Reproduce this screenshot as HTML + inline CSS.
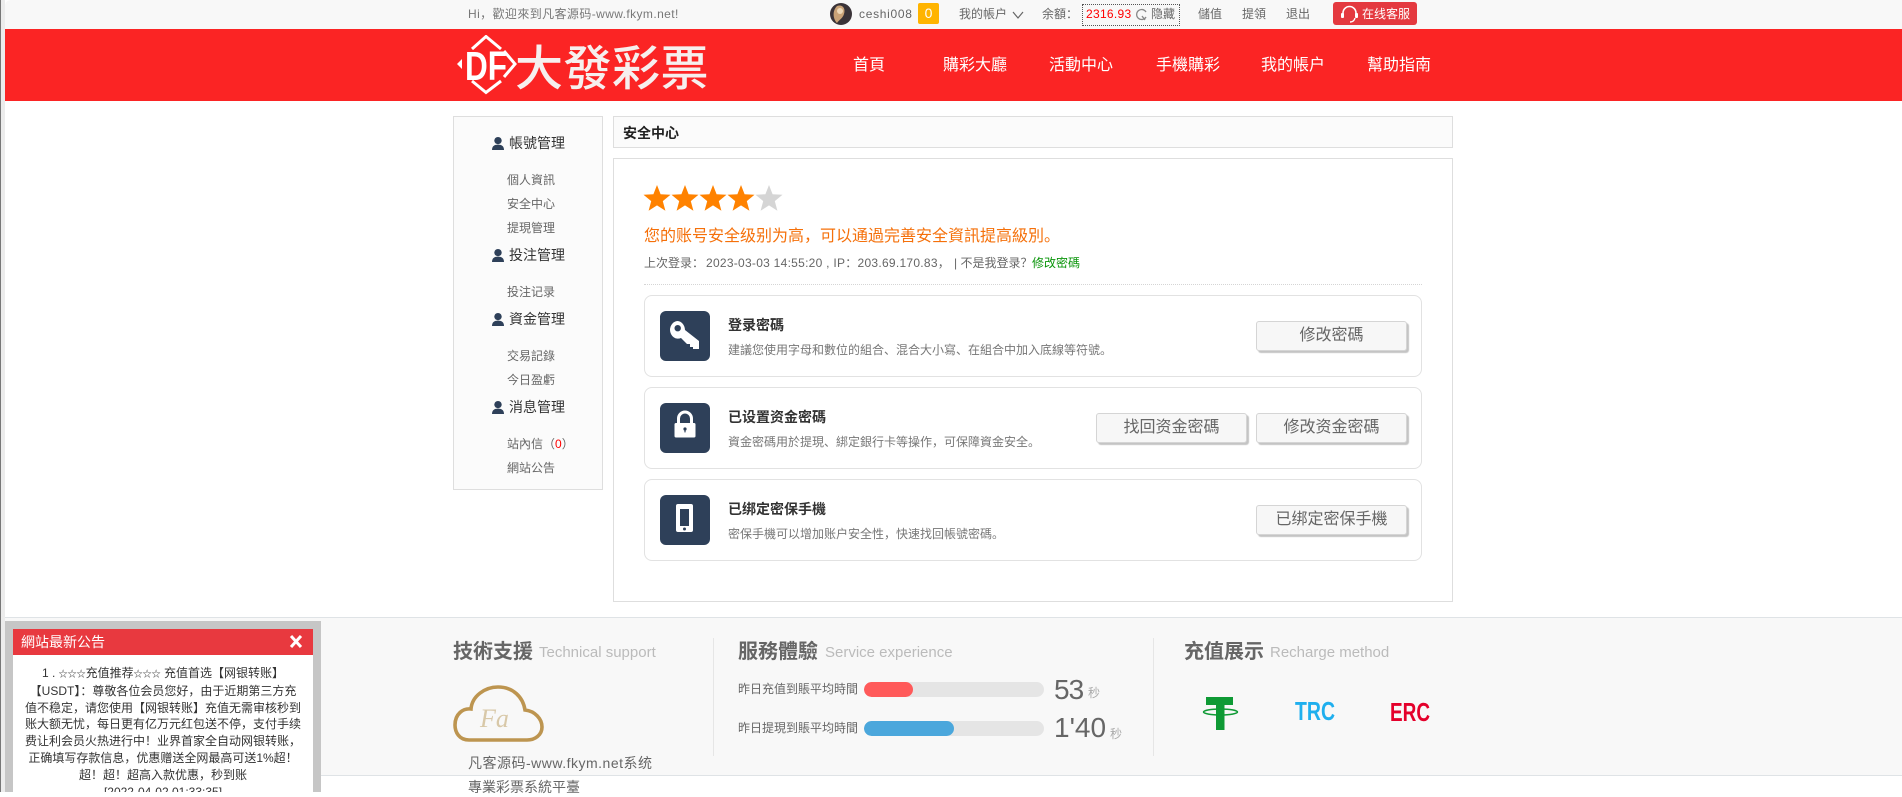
<!DOCTYPE html>
<html lang="zh"><head><meta charset="utf-8"><title>安全中心</title>
<style>
html,body{margin:0;padding:0;background:#fff}
body{width:1902px;height:792px;position:relative;overflow:hidden;font-family:"Liberation Sans","Noto Sans CJK TC",sans-serif;font-size:12px;color:#666}
.a{position:absolute;white-space:nowrap}
.c{line-height:20px;margin-top:-10px}
.h{font-size:14px;color:#333}
.n{font-size:16px;color:#fff;width:106px;text-align:center;line-height:24px;top:54px}
.side{left:507px}
.card{position:absolute;left:644px;width:776px;height:80px;border:1px solid #e2e2e2;border-radius:8px;background:#fff}
.ico{position:absolute;left:660px;width:50px;height:50px;background:#2e4059;border-radius:6px}
.t{left:728px;font-size:14px;font-weight:bold;color:#333}
.d{left:728px;font-size:12px;color:#777}
.b{position:absolute;width:149px;height:28px;line-height:27px;text-align:center;font-size:16px;color:#666;background:#f7f7f7;border:1px solid #d5d5d5;border-radius:3px;box-shadow:2px 2px 1px #c4c4c4}
.fh{font-size:20px;font-weight:bold;color:#666}
.fs{font-size:15px;color:#bbb}
.bar{position:absolute;left:864px;width:180px;height:15px;border-radius:8px;background:#e5e5e5;overflow:hidden}
.bar i{display:block;height:15px;border-radius:8px}
.st{font-size:9px}
</style></head><body>
<div class="a" style="left:0;top:0;width:1px;height:792px;background:#777"></div>
<div class="a" style="left:1px;top:0;width:4px;height:792px;background:#ececec"></div>
<div class="a" style="left:5px;top:0;width:1897px;height:29px;background:#f8f8f8;border-top-left-radius:6px"></div>

<!-- top bar -->
<div class="a c" style="left:468px;top:14px;color:#777;letter-spacing:.4px">Hi，歡迎來到凡客源码-www.fkym.net!</div>
<svg class="a" style="left:830px;top:3px" width="22" height="22" viewBox="0 0 22 22"><circle cx="11" cy="11" r="11" fill="#3a3338"/><path d="M7 3 C12 1 16 5 14 11 C13 15 9 17 7 20 C3 16 2 8 7 3Z" fill="#c9a277"/><circle cx="10" cy="8" r="3" fill="#eed8b8"/></svg>
<div class="a c" style="left:859px;top:14px;letter-spacing:.7px">ceshi008</div>
<div class="a" style="left:918px;top:3px;width:21px;height:21px;background:#ffb400;border-radius:2px;color:#fff;text-align:center;line-height:21px;font-size:14px">0</div>
<div class="a c" style="left:959px;top:14px">我的帳戶</div>
<svg class="a" style="left:1012px;top:11px" width="12" height="8" viewBox="0 0 12 8"><path d="M1 1 L6 7 L11 1" fill="none" stroke="#666" stroke-width="1.2"/></svg>
<div class="a c" style="left:1042px;top:14px">余額：</div>
<div class="a" style="left:1082px;top:4px;width:96px;height:20px;border:1px dotted #555"></div>
<div class="a c" style="left:1086px;top:14px;color:#f00;letter-spacing:.3px">2316.93</div>
<svg class="a" style="left:1136px;top:8px" width="12" height="13" viewBox="0 0 12 13"><path d="M10 9 A5 5 0 1 1 10 4 M9 12 L6 8" fill="none" stroke="#888" stroke-width="1.3"/></svg>
<div class="a c" style="left:1151px;top:14px">隐藏</div>
<div class="a c" style="left:1198px;top:14px">儲值</div>
<div class="a c" style="left:1242px;top:14px">提領</div>
<div class="a c" style="left:1286px;top:14px">退出</div>
<div class="a" style="left:1333px;top:2px;width:84px;height:23px;background:#e4393f;border-radius:3px"></div>
<svg class="a" style="left:1340px;top:4px" width="19" height="20" viewBox="0 0 19 20"><path d="M3 12 V9 A6.5 6.5 0 0 1 16 9 V12" fill="none" stroke="#fff" stroke-width="1.6"/><rect x="1" y="9" width="3" height="5" rx="1" fill="#fff"/><rect x="15" y="9" width="3" height="5" rx="1" fill="#fff"/><path d="M15 14 Q14 18 10 18" fill="none" stroke="#fff" stroke-width="1.4"/></svg>
<div class="a c" style="left:1362px;top:14px;color:#fff">在线客服</div>

<!-- red header -->
<div class="a" style="left:5px;top:29px;width:1897px;height:72px;background:#fb2424"></div>
<svg class="a" style="left:457px;top:35px" width="62" height="60" viewBox="0 0 62 60">
<path d="M15 14 L29 1.5 L44 14 M15 46 L29 57.5 L44 46 M47 16 L58 29 L47 42" fill="none" stroke="#fff" stroke-width="3"/>
<path d="M0 29 L5 24 V34Z" fill="#fff"/>
<text x="8" y="45" font-family="Liberation Sans" font-weight="bold" font-size="41" fill="#fff" textLength="42" lengthAdjust="spacingAndGlyphs">DF</text>
</svg>
<div class="a" style="left:515px;top:30px;font-size:48px;line-height:68px;letter-spacing:.5px;color:#f6efee;font-family:'Noto Sans CJK TC','Liberation Sans',sans-serif;font-weight:500">大發彩票</div>
<div class="a n" style="left:816px">首頁</div>
<div class="a n" style="left:922px">購彩大廳</div>
<div class="a n" style="left:1028px">活動中心</div>
<div class="a n" style="left:1135px">手機購彩</div>
<div class="a n" style="left:1240px">我的帳戶</div>
<div class="a n" style="left:1346px">幫助指南</div>

<!-- sidebar -->
<div class="a" style="left:453px;top:116px;width:148px;height:372px;background:#fbfbfb;border:1px solid #dedede"></div>
<svg width="0" height="0" style="position:absolute"><defs><symbol id="p" viewBox="0 0 12 13"><ellipse cx="6" cy="3.6" rx="3.7" ry="3.6" fill="#2e4059"/><path d="M0 13 C0 9 2.5 7.6 6 7.6 C9.5 7.6 12 9 12 13Z" fill="#2e4059"/></symbol></defs></svg>
<svg class="a" style="left:492px;top:137px" width="12" height="13"><use href="#p" width="12" height="13"/></svg>
<div class="a c h" style="left:509px;top:143px">帳號管理</div>
<div class="a c side" style="top:180px">個人資訊</div>
<div class="a c side" style="top:204px">安全中心</div>
<div class="a c side" style="top:228px">提現管理</div>
<svg class="a" style="left:492px;top:249px" width="12" height="13"><use href="#p" width="12" height="13"/></svg>
<div class="a c h" style="left:509px;top:255px">投注管理</div>
<div class="a c side" style="top:292px">投注记录</div>
<svg class="a" style="left:492px;top:313px" width="12" height="13"><use href="#p" width="12" height="13"/></svg>
<div class="a c h" style="left:509px;top:319px">資金管理</div>
<div class="a c side" style="top:356px">交易記錄</div>
<div class="a c side" style="top:380px">今日盈虧</div>
<svg class="a" style="left:492px;top:401px" width="12" height="13"><use href="#p" width="12" height="13"/></svg>
<div class="a c h" style="left:509px;top:407px">消息管理</div>
<div class="a c side" style="top:444px">站內信（<span style="color:#f00">0</span>）</div>
<div class="a c side" style="top:468px">網站公告</div>

<!-- main -->
<div class="a" style="left:613px;top:116px;width:838px;height:30px;background:#fbfbfb;border:1px solid #dedede"></div>
<div class="a c" style="left:623px;top:133px;font-size:14px;font-weight:bold;color:#222">安全中心</div>
<div class="a" style="left:613px;top:158px;width:838px;height:442px;background:#fff;border:1px solid #dedede"></div>
<svg class="a" style="left:643px;top:184px" width="140" height="29" viewBox="0 0 140 29">
<defs><path id="s" d="M14 1 L17.6 10.2 L27.5 10.8 L19.8 17.1 L22.4 26.8 L14 21.4 L5.6 26.8 L8.2 17.1 L0.5 10.8 L10.4 10.2Z"/></defs>
<use href="#s" fill="#ff8200"/><use href="#s" x="28" fill="#ff8200"/><use href="#s" x="56" fill="#ff8200"/><use href="#s" x="84" fill="#ff8200"/><use href="#s" x="112" fill="#d5d5d5"/>
</svg>
<div class="a c" style="left:644px;top:237px;font-size:16px;color:#f5700a">您的账号安全级别为高，可以通過完善安全資訊提高級別。</div>
<div class="a c" style="left:644px;top:263px">上次登录：</div>
<div class="a c" style="left:706px;top:263px;letter-spacing:.27px">2023-03-03 14:55:20 , IP：203.69.170.83，</div>
<div class="a c" style="left:954px;top:263px">| 不是我登录？</div>
<div class="a c" style="left:1032px;top:263px;color:#0a950a">修改密碼</div>
<div class="a" style="left:644px;top:284px;width:778px;border-top:1px dotted #d5d5d5"></div>

<div class="card" style="top:295px"></div>
<div class="card" style="top:387px"></div>
<div class="card" style="top:479px"></div>

<div class="ico" style="top:311px"><svg width="50" height="50" viewBox="0 0 50 50"><path fill-rule="evenodd" fill="#fff" d="M17.5 10 A8 9.5 0 0 1 25 19 L39 30 V38 H33 V36 H30 V33 H27 L21 27 A8 9 0 0 1 10 19 A8 9 0 0 1 17.5 10Z M17.7 14 A3.2 3.2 0 1 0 17.7 20.4 A3.2 3.2 0 1 0 17.7 14Z"/></svg></div>
<div class="ico" style="top:403px"><svg width="50" height="50" viewBox="0 0 50 50"><path d="M18.5 21 V15.5 A6.5 6.5 0 0 1 31.5 15.5 V21" fill="none" stroke="#fff" stroke-width="3"/><rect x="14.5" y="20" width="21" height="14.5" rx="1.5" fill="#fff"/><circle cx="25" cy="26" r="1.6" fill="#2e4059"/><rect x="24.4" y="26" width="1.2" height="3.4" fill="#2e4059"/></svg></div>
<div class="ico" style="top:495px"><svg width="50" height="50" viewBox="0 0 50 50"><rect x="16" y="9" width="17" height="28" rx="2" fill="#fff"/><rect x="20" y="14" width="9" height="17" fill="#2e4059"/><circle cx="24.5" cy="34" r="1.5" fill="#2e4059"/></svg></div>

<div class="a c t" style="top:325px">登录密碼</div>
<div class="a c d" style="top:350px">建議您使用字母和數位的組合、混合大小寫、在組合中加入底線等符號。</div>
<div class="b" style="left:1256px;top:321px">修改密碼</div>

<div class="a c t" style="top:417px">已设置资金密碼</div>
<div class="a c d" style="top:442px">資金密碼用於提現、綁定銀行卡等操作，可保障資金安全。</div>
<div class="b" style="left:1096px;top:413px">找回资金密碼</div>
<div class="b" style="left:1256px;top:413px">修改资金密碼</div>

<div class="a c t" style="top:509px">已绑定密保手機</div>
<div class="a c d" style="top:534px">密保手機可以增加账户安全性，快速找回帳號密碼。</div>
<div class="b" style="left:1256px;top:505px">已绑定密保手機</div>

<!-- footer -->
<div class="a" style="left:5px;top:617px;width:1897px;height:159px;background:#f8f8f8;border-top:1px solid #dfe3e6;border-bottom:1px solid #dfe3e6;box-sizing:border-box"></div>
<div class="a c fh" style="left:453px;top:652px">技術支援</div>
<div class="a c fs" style="left:539px;top:653px">Technical support</div>
<svg class="a" style="left:453px;top:685px" width="92" height="58" viewBox="0 0 92 58"><path d="M16 55 C6 55 2 47 2 40 C2 29 10 23 18 24 C19 11 32 2 45 2 C60 2 70 12 72 25 C82 26 89 34 89 42 C89 50 82 55 74 55Z" fill="none" stroke="#bd9550" stroke-width="3.6"/><text x="27" y="42" font-family="Liberation Serif" font-style="italic" font-size="26" fill="#d8c8a8">Fa</text></svg>
<div class="a c" style="left:468px;top:763px;font-size:14px;letter-spacing:.5px">凡客源码-www.fkym.net系统</div>
<div class="a c" style="left:468px;top:787px;font-size:14px">專業彩票系統平臺</div>

<div class="a" style="left:713px;top:638px;width:1px;height:118px;background:#e6e6e6"></div>
<div class="a" style="left:1153px;top:638px;width:1px;height:118px;background:#e6e6e6"></div>
<div class="a c fh" style="left:738px;top:652px">服務體驗</div>
<div class="a c fs" style="left:825px;top:653px">Service experience</div>
<div class="a c" style="left:738px;top:689px">昨日充值到賬平均時間</div>
<div class="bar" style="top:682px"><i style="width:49px;background:#ff5a5a"></i></div>
<div class="a" style="left:1054px;top:674px;font-size:28px;line-height:32px;letter-spacing:-1px;color:#666">53</div>
<div class="a c" style="left:1088px;top:693px;color:#aaa;font-size:12px">秒</div>
<div class="a c" style="left:738px;top:728px">昨日提現到賬平均時間</div>
<div class="bar" style="top:721px"><i style="width:90px;background:#4ba7dc"></i></div>
<div class="a" style="left:1054px;top:712px;font-size:28px;line-height:32px;color:#666">1'40</div>
<div class="a c" style="left:1110px;top:734px;color:#aaa;font-size:12px">秒</div>

<div class="a c fh" style="left:1184px;top:652px">充值展示</div>
<div class="a c fs" style="left:1270px;top:653px">Recharge method</div>
<svg class="a" style="left:1200px;top:696px" width="40" height="36" viewBox="0 0 40 36"><path d="M6 1 H33 V9 H24.5 V34 H16 V9 H6Z" fill="#0f9a35"/><ellipse cx="20.5" cy="16" rx="17" ry="3" fill="none" stroke="#0f9a35" stroke-width="1.5"/></svg>
<svg class="a" style="left:1290px;top:696px" width="150" height="30" viewBox="0 0 150 30">
<text x="5" y="24" font-family="Liberation Sans" font-weight="bold" font-size="26" fill="#1fafee" textLength="40" lengthAdjust="spacingAndGlyphs">TRC</text>
<text x="100" y="25" font-family="Liberation Sans" font-weight="bold" font-size="26" fill="#e4002b" textLength="40" lengthAdjust="spacingAndGlyphs">ERC</text>
</svg>

<!-- popup -->
<div class="a" style="left:5px;top:621px;width:316px;height:171px;background:#c6c6c6"></div>
<div class="a" style="left:13px;top:629px;width:300px;height:163px;background:#fff;overflow:hidden">
<div style="height:26px;background:#e8393f;color:#fff;font-size:14px;line-height:26px;padding-left:8px;position:relative">網站最新公告<svg style="position:absolute;left:276px;top:6px" width="14" height="13" viewBox="0 0 14 13"><path d="M2 1 L12 12 M12 1 L2 12" stroke="#fff" stroke-width="3"/></svg></div>
<div style="text-align:center;font-size:12px;line-height:16.8px;color:#333;padding-top:10px;white-space:nowrap">1 . <span class="st">☆☆☆</span>充值推荐<span class="st">☆☆☆</span> 充值首选【网银转账】<br>【USDT】：尊敬各位会员您好，由于近期第三方充<br>值不稳定，请您使用【网银转账】充值无需审核秒到<br>账大额无忧，每日更有亿万元红包送不停，支付手续<br>费让利会员火热进行中！业界首家全自动网银转账，<br>正确填写存款信息，优惠赠送全网最高可送1%超！<br>超！超！超高入款优惠，秒到账<br>[2022-04-02 01:33:35]</div>
</div>
</body></html>
